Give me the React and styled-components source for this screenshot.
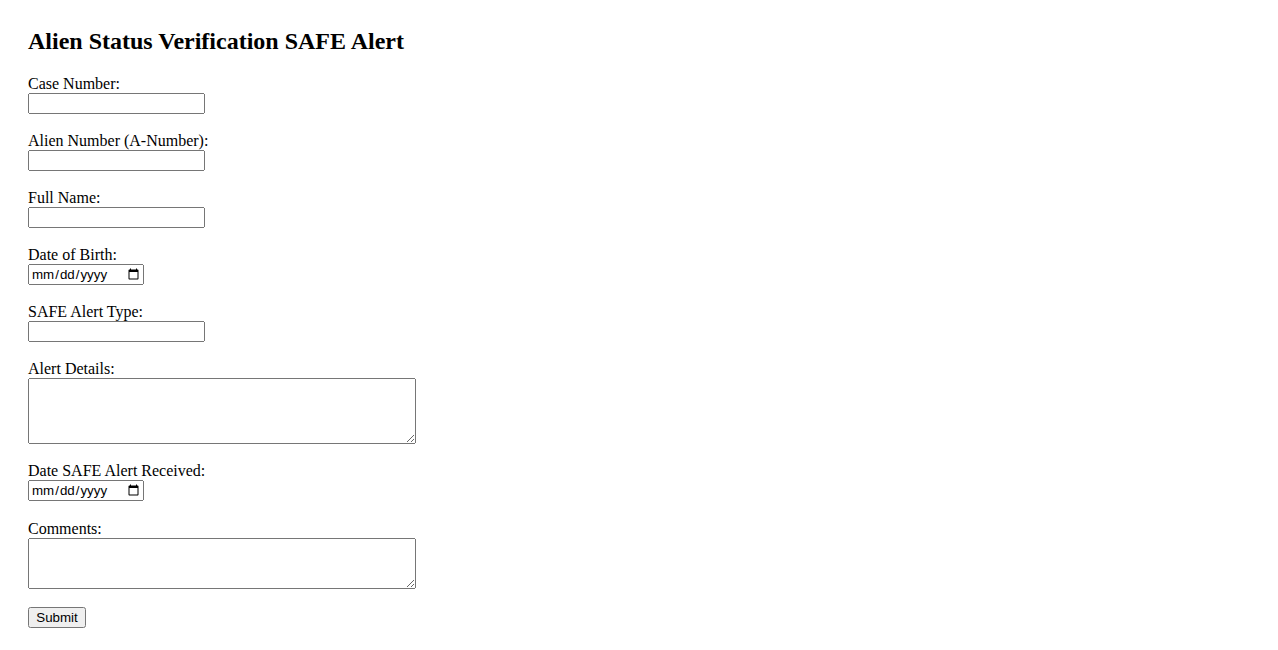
import React from "react";
import styled, { createGlobalStyle } from "styled-components";

const GlobalStyle = createGlobalStyle`
  html, body {
    margin: 0;
    padding: 0;
    background: #ffffff;
  }
  body {
    font-family: "Liberation Serif", "Times New Roman", serif;
    font-size: 16px;
    color: #000000;
  }
`;

const Page = styled.div`
  padding: 28px 28px 20px 28px;
`;

const Title = styled.h2`
  margin: 0 0 20px 0;
  font-family: "Liberation Serif", "Times New Roman", serif;
  font-size: 24px;
  font-weight: bold;
  line-height: 27px;
`;

const Form = styled.form`
  display: flex;
  flex-direction: column;
  align-items: flex-start;
`;

const Field = styled.div`
  display: flex;
  flex-direction: column;
  align-items: flex-start;
  margin-bottom: ${(p) => p.$gap ?? 18}px;
`;

const Label = styled.label`
  display: block;
  font-size: 16px;
  line-height: 18px;
`;

const TextInput = styled.input`
  box-sizing: border-box;
  width: 177px;
  height: 21px;
  margin: 0;
  font-family: "Liberation Sans", Arial, sans-serif;
  font-size: 13.333px;
`;

const DateInput = styled.input`
  box-sizing: border-box;
  width: 116px;
  height: 21px;
  margin: 0;
  font-family: "Liberation Sans", Arial, sans-serif;
  font-size: 13.333px;
`;

const TextArea = styled.textarea`
  box-sizing: border-box;
  width: 388px;
  height: ${(p) => p.$h}px;
  margin: 0;
  font-family: "Liberation Mono", monospace;
  font-size: 13.333px;
`;

const SubmitButton = styled.button`
  box-sizing: border-box;
  width: 58px;
  height: 21px;
  margin: 0;
  font-family: "Liberation Sans", Arial, sans-serif;
  font-size: 13.333px;
`;

export default function App() {
  return (
    <>
      <GlobalStyle />
      <Page>
        <Title>Alien Status Verification SAFE Alert</Title>
        <Form onSubmit={(e) => e.preventDefault()}>
          <Field>
            <Label htmlFor="caseNumber">Case Number:</Label>
            <TextInput id="caseNumber" type="text" />
          </Field>
          <Field>
            <Label htmlFor="aNumber">Alien Number (A-Number):</Label>
            <TextInput id="aNumber" type="text" />
          </Field>
          <Field>
            <Label htmlFor="fullName">Full Name:</Label>
            <TextInput id="fullName" type="text" />
          </Field>
          <Field>
            <Label htmlFor="dob">Date of Birth:</Label>
            <DateInput id="dob" type="date" />
          </Field>
          <Field>
            <Label htmlFor="alertType">SAFE Alert Type:</Label>
            <TextInput id="alertType" type="text" />
          </Field>
          <Field>
            <Label htmlFor="details">Alert Details:</Label>
            <TextArea id="details" $h={66} />
          </Field>
          <Field $gap={19}>
            <Label htmlFor="received">Date SAFE Alert Received:</Label>
            <DateInput id="received" type="date" />
          </Field>
          <Field>
            <Label htmlFor="comments">Comments:</Label>
            <TextArea id="comments" $h={51} />
          </Field>
          <SubmitButton type="submit">Submit</SubmitButton>
        </Form>
      </Page>
    </>
  );
}
